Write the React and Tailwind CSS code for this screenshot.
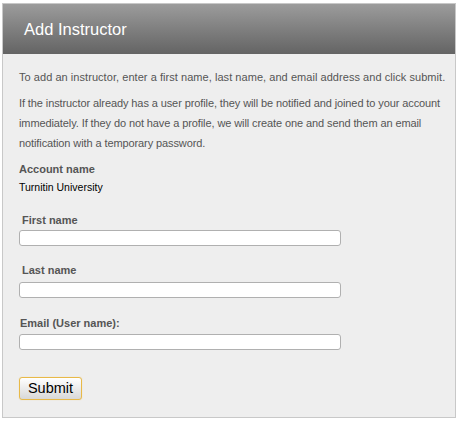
export default function App() {
  const font = { fontFamily: '"Liberation Sans", Arial, sans-serif' };
  return (
    <div className="w-[459px] h-[422px] bg-white pt-[3px] pl-[2px]" style={font}>
      <div className="w-[454px] h-[415px] border border-[#c8c8c8] bg-[#eeeeee] flex flex-col">
        <div className="h-[50px] bg-gradient-to-b from-[#9c9c9c] to-[#646464] flex items-center pl-[21px]">
          <h1 className="text-white text-[16.5px] leading-none">Add Instructor</h1>
        </div>
        <div className="pl-[16px] pr-[2px] pt-[13px] text-[#555] text-[11px] leading-[20px]">
          <p className="tracking-[0.05px]">To add an instructor, enter a first name, last name, and email address and click submit.</p>
          <p className="mt-[6px] tracking-[-0.1px]">If the instructor already has a user profile, they will be notified and joined to your account<br />immediately. If they do not have a profile, we will create one and send them an email<br />notification with a temporary password.</p>
          <div className="mt-[8px] font-bold text-[11px] leading-[16px]">Account name</div>
          <div className="mt-[2px] text-black text-[10.5px] leading-[16px]">Turnitin University</div>
          <div className="mt-[17px] pl-[3px] font-bold text-[11px] leading-[16px]">First name</div>
          <input className="mt-[2px] block w-[322px] h-[16px] bg-white border border-[#b0b0b0] rounded-[3px]" />
          <div className="mt-[16px] pl-[3px] font-bold text-[11px] leading-[16px]">Last name</div>
          <input className="mt-[4px] block w-[322px] h-[16px] bg-white border border-[#b0b0b0] rounded-[3px]" />
          <div className="mt-[17px] pl-[1px] font-bold text-[11px] leading-[16px]">Email (User name):</div>
          <input className="mt-[3px] block w-[322px] h-[16px] bg-white border border-[#b0b0b0] rounded-[3px]" />
          <button className="mt-[27px] block h-[23px] w-[63px] text-[14.5px] leading-none text-black border border-[#e8b948] rounded-[3px] bg-gradient-to-b from-white to-[#d8d8d8] shadow-[0_0_1px_rgba(232,185,72,0.6)]">Submit</button>
        </div>
      </div>
    </div>
  );
}
